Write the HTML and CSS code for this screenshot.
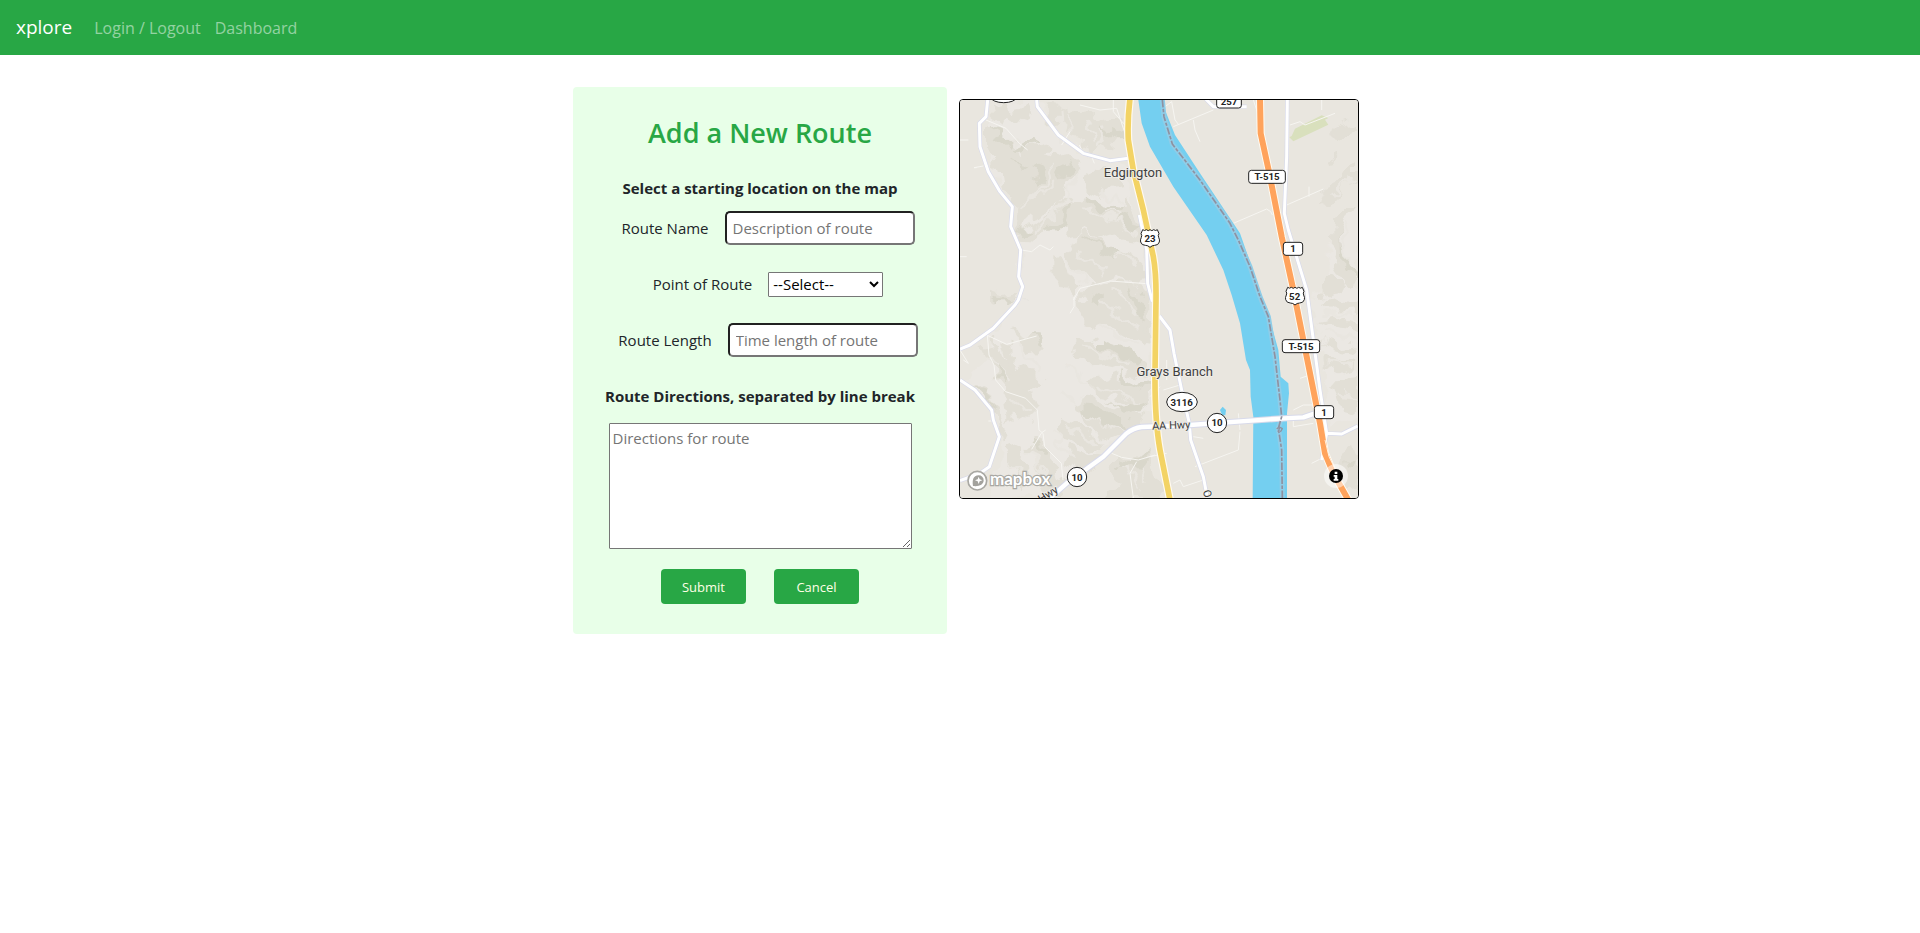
FILE: index.html
```html
<!DOCTYPE html>
<html lang="en">
<head>
<meta charset="utf-8">
<meta name="viewport" content="width=device-width, initial-scale=1">
<title>xplore</title>
<link rel="stylesheet" href="styles.css">
</head>
<body>
<nav class="navbar">
  <a class="brand" href="#">xplore</a>
  <a class="nav-link" href="#">Login / Logout</a>
  <a class="nav-link" href="#">Dashboard</a>
</nav>
<main class="content">
  <form class="route-form">
    <h1 class="title">Add a New Route</h1>
    <p class="section-label">Select a starting location on the map</p>
    <div class="field">
      <label for="name">Route Name</label>
      <input class="text-input" id="name" type="text" placeholder="Description of route">
    </div>
    <div class="field">
      <label for="point">Point of Route</label>
      <select class="select" id="point"><option>--Select--</option></select>
    </div>
    <div class="field">
      <label for="length">Route Length</label>
      <input class="text-input" id="length" type="text" placeholder="Time length of route">
    </div>
    <label class="section-label directions-label" for="directions">Route Directions, separated by line break</label>
    <textarea class="directions" id="directions" placeholder="Directions for route"></textarea>
    <div class="actions">
      <button class="btn" type="submit">Submit</button>
      <button class="btn" type="button">Cancel</button>
    </div>
  </form>
  <div class="map">
    <svg class="map-canvas" viewBox="0 0 1194 1194" role="img" aria-label="Map">
      <defs>
        <filter id="terrain" x="0" y="0" width="1194" height="1194" filterUnits="userSpaceOnUse">
          <feTurbulence type="fractalNoise" baseFrequency="0.022" numOctaves="2" seed="4"/>
          <feDisplacementMap in="SourceGraphic" scale="70" xChannelSelector="R" yChannelSelector="G"/>
        </filter>
      </defs>
      <rect class="land" width="1194" height="1194"/>
      <!-- hill shading -->
      <g filter="url(#terrain)">
      <g class="hill-light">
        <path d="M90 10L230 0 260 60 330 130 440 190 500 200 530 330 560 480 570 700 575 930 500 980 430 1050 330 1130 230 1194 90 1194 125 1010 100 930 20 840 110 700 180 590 190 450 160 320 90 200z"/>
        <path d="M1194 330L1150 360 1100 450 1120 560 1050 600 1090 760 1110 980 1194 960z"/>
      </g>
      <g class="hill">
        <path d="M85 20l50-12 30 22 40-10 15 30-30 20-40-12-30 16-30-24z"/>
        <path d="M250 10l60 5 30 20 40-5 40 30 60-10 15 45-30 40-40-5-25 30-50-30-40-55-40-10z"/>
        <path d="M75 75l50 20 30 40 35 15 50-30 30 25-40 25-20 40-40-15-30 25-40-30-25-50z"/>
        <path d="M120 200l60-35 50-5 60 15 45-10 30 25-50 60-25 65-60 20-30-30-40 20-25-45z"/>
        <path d="M165 320l50-20 60-40 30-60 20 15-20 80-60 60-55 20-25 50-15-30z"/>
        <path d="M160 375l40 15 35-15 50-40 30-60 25 5-20 70-50 40-50 35-40-5z"/>
        <path d="M370 235l40-30 50 10 30 40-40 5-30 25-35-15z"/>
        <path d="M340 300l50-10 40 30 50 5 30-30 30 60 20 80-60-10-35-25-45 15-60-20-40 10-20-50z"/>
        <path d="M350 400l60 15 50 35 60 20 40 40-30 40-70-20-50 25-50-30-45-50z"/>
        <path d="M280 465l30 20 15 40 40 40-25 20-35-40-25-45z"/>
        <path d="M350 600l40-40 60-15 80 5 40 60 5 110-50-10-50-40-50 15-60-20z"/>
        <path d="M90 575l40 10 50-12-8 22-50 15-32-12z"/>
        <path d="M350 705l50 20 40 30 60-5 60 50-10 30-60-15-50-30-60 5-50-45z"/>
        <path d="M400 645l50-25 40 40 60 20 10 50-60-20-40-25z"/>
        <path d="M400 835l60-10 40 25 75 10-10 50-50 20-60-35-50-10z"/>
        <path d="M350 915l50-20 60 30 90 30-60 45-45 20-60-40z"/>
        <path d="M300 960l70 20 70 50-15 35-40-10-40-25-50-10z"/>
        <path d="M330 1040l60 30 20 25-40 20-60-20z"/>
        <path d="M60 735l50-10 20 55 50 30 60 10 25 30-60 20-50 10-40-50-30-40z"/>
        <path d="M120 730l30 10 10 50 40 20-15 20-45-30z"/>
        <path d="M150 690l40 15 50-5 20 40-30 25-40-25z"/>
        <path d="M130 880l40-20 50 20 20 50-30 30-50-10-20 20z"/>
        <path d="M200 1040l40-30 20 50 50 70 15 20-60 40-20-60z"/>
        <path d="M135 1050l45-20 20 60 30 50-50 30-20-60z"/>
        <path d="M20 840l50 20 40 70 30 60-10 40-20-80-30-60z"/>
        <path d="M465 1050l60 25 50-10 10 60 25 69-180 0 40-50-20-50z"/>
        <path d="M1110 100l40-20 44-10 0 30-40 5zM1100 180l20-8 3 10-25 8z"/>
        <path d="M1075 280l60-30 40-50 19-5 0 50-40 20-40 40-30 10z"/>
        <path d="M1120 350l35-20 30 0-30 30-15 60 10 60 44 70-20 10-40-50-20-60z"/>
        <path d="M1080 560l40-30 35 10-10 30-50 30z"/>
        <path d="M1075 610l60-10 59 10 0 20-60 5zM1080 660l50-10 64 20 0 20-70-10zM1090 720l40 15 64-5-30 25-60-10z"/>
        <path d="M1090 770l50 20 54-10 0 30-60 10-40-20zM1110 850l84-10 0 100-50-10z"/>
        <path d="M1140 1080l54-40 0 110-30 10-40-40z"/>
      </g>
      <g class="ridge">
        <path d="M300 20l5 120M335 40l-4 90M380 50l20 60M440 70l-30 70M140 110l60 60M290 190l-70 110M350 210l-50 130M180 340l100-90M230 400l100-110M370 320l130 60M400 430l130 60M320 480l60 80M420 270l80 50M440 330l90 80M350 450l90 60"/>
        <path d="M370 740l150 60M420 680l120 60M400 600l140 80M450 570l100 90M410 860l140 60M370 940l130 50M330 980l90 50M180 730l60 80M70 760l90 80M150 900l60 40M150 1080l50 80M210 1060l60 90M280 1000l50 80M330 800l70 50M300 880l50 30M480 1080l60 90M520 1070l40 80"/>
        <path d="M1090 640l100 10M1090 700l100 15M1100 790l90 10M1130 880l60 10M1170 360l-20 90 30 80M1110 290l70-50"/>
      </g>
      <g class="hill-dark">
        <path d="M95 80l30 15 30 35-10 10-35-25zM155 150l35-15 25-25 12 8-30 35-35 12zM205 210l35-20 20 10-15 40-20 15 5-30z"/>
        <path d="M165 375l35 18 25-2-30 15-35-6zM270 385l30-20 25-60 8 5-15 60-40 30zM150 180l30 20 20-5-25 20z"/>
        <path d="M385 285l35 25 60 15-10 12-50-8-40-30zM455 360l50-15 40 50-30-5-25-20zM360 410l60 25 50 15-15 12-60-25z"/>
        <path d="M420 80l50 20 25-30 12 8-20 45-30-8zM310 200l20-20 5 15-20 40-20 20z"/>
        <path d="M100 590l60 10 25-10-40 22-40-5zM500 550l40 30 20 90-20-10-20-70zM380 600l40-30 10 20-30 40z"/>
        <path d="M420 720l60 20 70 45-10 12-70-30-50-20zM480 820l50 25 45-5-20 25-70-20z"/>
        <path d="M360 920l70 10 70 40-15 12-60-20-60-25zM440 900l60 30 60-25-15 35-40 10z"/>
        <path d="M30 850l40 15 35 65-12-10-40-55zM110 790l35 40-10 12-25-30zM215 1020l18-4 25 60-10 0zM225 700l20 0 8 35-14-5z"/>
        <path d="M475 1065l50 20 50-25-40 50-50-10zM1140 400l10 60 44 70-10 5-40-50zM1150 1090l44-20-10 30-30 20z"/>
      </g>
      </g>
      <path class="park" d="M988 112l12 12 105-50-10-15 10-5-20-8-80 40-10 22z"/>
      <!-- minor lanes -->
      <g class="lane">
        <path d="M78 60l60 25 40 45 25 20M360 15l60 15 50-5 25 75 8 10M460 0v35l35 40M330 95l-25 40M370 160l-12 -25M395 170l8 20M0 120h25M50 203l-8 0 28-5M0 470h20M185 450l30 5 25-20 30 15 10-10M340 600l20-35 90-22 110 8M330 640l12-20 0-30"/>
        <path d="M80 705l60 28 90-25M82 705l5 60 15 30 5 45 30 35 60 20 35 35 5 60 12 10 5 40 50 50 5 50M215 1048l30-50 12-8M0 750l25 40-15-10M455 1060l30 12 50 8 50-15M530 1085l-20 35 10 74M85 963h15"/>
        <path d="M615 20l20-15 10 55 12 15M640 80l120-50M700 60l5 30 15 35M820 370l100-43 12 8 5 10M980 315l110-48M1047 290v-30M990 75l30-10 15 10 90-35M1085 30v-30M880 0l20 60"/>
        <path d="M600 860l-30 30M610 870l50-15M620 780l0 60M705 1100l130-50 5-55M840 990l-5-50M570 1070l50-10M640 1150l20-10 10 20 60-20M700 1010l30 5M1020 835l30-10M1000 930l30-15 30 0M1000 950v30l60-10M1055 1090l30-15 10-20"/>
      </g>
      <path class="river" d="M535 0l10 70 25 70 70 120 100 145 50 105 25 75 25 85 18 110 12 30 2 80 8 60-2 244h103V940l6-60-2-30-23-20-7-80-25-90-20-60-70-200-20-30-100-150-75-115-30-75-3-30zM780 930l8-10 10 10-2 16-10-2z"/>
      <path class="state-halo" d="M607 0l5 50 25 82 83 108 90 130 25 50 35 80 30 90 25 60 20 120 15 130 5 50-10 35 10 65 2 144"/>
      <!-- roads -->
      <g class="road-case">
        <path d="M83 0l-5 50-20 20 2 70 25 75 35 60 37 45-5 60 30 70-6 80 12 30-13 40-10 15-65 70-70 50-30 12M0 840l45 30 50 60 5 30 18 50-30 90-28 20-60 22M230 0l2 20 63 85 75 55 80 22 55-7M538 345l22 105 3 100 14 55M598 648l32 42 12 70 23 110 23 100 4 50 38 110 12 63M725-30l15 30 20 20h100M982 0l-2 170-7 170 12 50 55 180 20 150 20 150 20 130-15 80M1100 1000l45 2 48-24"/>
      </g>
      <g class="road">
        <path d="M83 0l-5 50-20 20 2 70 25 75 35 60 37 45-5 60 30 70-6 80 12 30-13 40-10 15-65 70-70 50-30 12M0 840l45 30 50 60 5 30 18 50-30 90-28 20-60 22M230 0l2 20 63 85 75 55 80 22 55-7M538 345l22 105 3 100 14 55M598 648l32 42 12 70 23 110 23 100 4 50 38 110 12 63M725-30l15 30 20 20h100M982 0l-2 170-7 170 12 50 55 180 20 150 20 150 20 130-15 80M1100 1000l45 2 48-24"/>
      </g>
      <path class="main-case" d="M270 1194L320 1150 430 1070 500 1000Q520 984 545 981L690 975 970 955 1030 952 1080 935"/>
      <path class="main" d="M270 1194L320 1150 430 1070 500 1000Q520 984 545 981L690 975 970 955 1030 952 1080 935"/>
      <path class="state" d="M607 0l5 50 25 82 83 108 90 130 25 50 35 80 30 90 25 60 20 120 15 130 5 50-10 35 10 65 2 144"/>
      <path class="hw-case" d="M510-5Q502 60 505 120L520 210 550 330 580 470Q589 520 588 600L585 820Q584 960 600 1050L630 1200M900-5L902 100 928 220 965 410 1000 570 1040 770 1080 970 1095 1060 1120 1120 1165 1200"/>
      <path class="yellow" d="M510-5Q502 60 505 120L520 210 550 330 580 470Q589 520 588 600L585 820Q584 960 600 1050L630 1200"/>
      <path class="orange" d="M900-5L902 100 928 220 965 410 1000 570 1040 770 1080 970 1095 1060 1120 1120 1165 1200"/>
      <path class="ramp" d="M1095 1020l12 50 20 40"/>
      <!-- route shields -->
      <g class="shield">
        <ellipse cx="131" cy="-8" rx="38" ry="16"/>
        <rect x="770" y="-24" width="74" height="48" rx="8"/>
        <rect x="866" y="211" width="110" height="39" rx="8"/>
        <rect x="970" y="427" width="58" height="39" rx="8"/>
        <rect x="967" y="719" width="112" height="39" rx="8"/>
        <rect x="1063" y="917" width="58" height="39" rx="8"/>
        <ellipse cx="666" cy="906" rx="46" ry="29"/>
        <circle cx="771" cy="969" r="29"/>
        <circle cx="351" cy="1131" r="29"/>
        <path d="M548 389q6 5 11 0 6 6 11 0 6 6 11 0 6 5 11 0l5 12q-4 5-1 11 4 8 2 14-3 10-14 10-8 0-14 6-6-6-14-6-11 0-14-10-2-6 2-14 3-6-1-11z"/>
        <path d="M983 562q6 5 11 0 6 6 11 0 6 6 11 0 6 5 11 0l5 12q-4 5-1 11 4 8 2 14-3 10-14 10-8 0-14 6-6-6-14-6-11 0-14-10-2-6 2-14 3-6-1-11z"/>
      </g>
      <g class="shield-text">
        <text x="807" y="16">257</text>
        <text x="921" y="241">T-515</text>
        <text x="999" y="457">1</text>
        <text x="570" y="426">23</text>
        <text x="1004" y="599">52</text>
        <text x="1023" y="749">T-515</text>
        <text x="1092" y="947">1</text>
        <text x="665" y="917">3116</text>
        <text x="771" y="979">10</text>
        <text x="351" y="1142">10</text>
      </g>
      <g class="place">
        <text x="519" y="232">Edgington</text>
        <text x="644" y="829">Grays Branch</text>
        <text class="street" x="634" y="987" transform="rotate(-2 634 985)">AA Hwy</text>
        <text class="street" x="270" y="1192" transform="rotate(-32 270 1192)">Hwy</text>
        <text class="street" x="742" y="1192" transform="rotate(75 742 1181)">O</text>
      </g>
      <path class="glyph" d="M950 987l8-6 9 5-6 10M960 981l-6 15"/>
      <!-- mapbox mark -->
      <circle class="logo-ring" cx="52" cy="1142" r="28"/>
      <path class="logo-drop" d="M39 1158c-3-16 0-32 17-32a15 15 0 0 1 15 15c0 14-15 19-32 17z"/>
      <path class="logo-star" d="M56 1130l3 8 8 3-8 3-3 8-3-8-8-3 8-3z"/>
      <text class="logo-text" x="90" y="1156">mapbox</text>
      <!-- attribution toggle -->
      <circle class="info-halo" cx="1128" cy="1128" r="36"/>
      <circle class="info" cx="1128" cy="1128" r="21"/>
      <path class="info-i" d="M1124 1115h8v7h-8zM1121 1125h11v12h3v5h-14v-5h3v-7h-3z"/>
    </svg>
  </div>
</main>
</body>
</html>
```
FILE: styles.css
```css
*, *::before, *::after { box-sizing: border-box; }
body {
  margin: 0;
  background: #fff;
  color: #212529;
  font: 15px/24px "Open Sans", "Noto Sans", sans-serif;
}
.navbar {
  display: flex;
  align-items: center;
  padding: 12px 16px;
  background: #28a745;
}
.brand {
  margin-right: 22px;
  color: #fff;
  font-size: 19px;
  line-height: 31px;
  text-decoration: none;
}
.nav-link {
  margin-right: 14px;
  color: rgba(255, 255, 255, .5);
  font-size: 16px;
  text-decoration: none;
}
.content {
  display: flex;
  justify-content: center;
  align-items: flex-start;
  gap: 12px;
  padding: 32px 0 32px 12px;
}
.route-form {
  display: flex;
  flex-direction: column;
  align-items: center;
  width: 374px;
  padding: 29px 24px 30px;
  border-radius: 4px;
  background: #e8ffe8;
}
.title {
  margin: 0 0 26px;
  color: #28a745;
  font-size: 27px;
  font-weight: 600;
  line-height: 34px;
}
.section-label { margin: 0; font-weight: 700; white-space: nowrap; }
.directions-label { margin-top: 12px; }
.field {
  display: flex;
  align-items: center;
  gap: 16px;
  min-height: 26px;
  margin: 11px 0 15px 16px;
}
.text-input {
  width: 190px;
  height: 34px;
  padding: 0 6px;
  border: 2px inset #767676;
  border-radius: 5px;
  background: #fff;
  color: #212529;
  font: inherit;
}
.text-input::placeholder, .directions::placeholder { color: #757575; }
.select {
  width: 115px;
  height: 25px;
  border: 1px solid #767676;
  border-radius: 1px;
  background: #fff;
  color: #000;
  font: inherit;
}
.directions {
  width: 303px;
  height: 126px;
  margin: 15px 0 20px;
  padding: 2px 3px;
  border: 1px solid #767676;
  border-radius: 1px;
  background: #fff;
  font: inherit;
}
.actions { display: flex; gap: 28px; }
.btn {
  width: 85px;
  height: 35px;
  padding: 0;
  border: 0;
  border-radius: 4px;
  background: #28a745;
  color: #ffffe6;
  font: 13px/20px "Open Sans", "Noto Sans", sans-serif;
}
.map {
  width: 400px;
  margin-top: 12px;
  overflow: hidden;
  border: 1px solid #000;
  border-radius: 4px;
}
.map-canvas { display: block; width: 100%; }
.map-canvas path { stroke-linejoin: round; }
.land { fill: #e9e6df; }
.hill-light { fill: #ebe8e3; }
.hill { fill: #e2dfd6; }
.hill-dark { fill: #d9d7cb; }
.ridge { fill: none; stroke: #e9e6e0; stroke-width: 9; }
.park { fill: #d9e0bd; }
.lane { fill: none; stroke: #f6f5f1; stroke-width: 3; }
.river { fill: #74cff0; }
.state-halo { fill: none; stroke: #8fcde8; stroke-width: 15; }
.state { fill: none; stroke: #9091a0; stroke-width: 5; stroke-dasharray: 22 5 10 5; }
.road-case { fill: none; stroke: #d8daea; stroke-width: 13; }
.road { fill: none; stroke: #fff; stroke-width: 9; }
.main-case { fill: none; stroke: #d8daea; stroke-width: 19; }
.main { fill: none; stroke: #fff; stroke-width: 13; }
.hw-case { fill: none; stroke: #fffaf0; stroke-width: 24; }
.yellow { fill: none; stroke: #f3d364; stroke-width: 17; }
.orange { fill: none; stroke: #ffa35c; stroke-width: 18; }
.ramp { fill: none; stroke: #fff0df; stroke-width: 3; }
.shield { fill: #fff; stroke: #222; stroke-width: 3; }
.shield-text {
  fill: #222;
  font: 700 29px Roboto, sans-serif;
  text-anchor: middle;
}
.place {
  fill: #40403f;
  stroke: #f0eee9;
  stroke-width: 5;
  paint-order: stroke;
  font: 39px Roboto, sans-serif;
  text-anchor: middle;
}
.street { font-size: 33px; }
.glyph { fill: none; stroke: #9091a0; stroke-width: 4; }
.logo-ring { fill: #fff; stroke: #a9a8a3; stroke-width: 5; }
.logo-drop { fill: #a3a29d; }
.logo-star { fill: #fff; }
.logo-text {
  fill: #fff;
  stroke: #a9a8a3;
  stroke-width: 7;
  paint-order: stroke;
  font: 700 51px Lato, sans-serif;
}
.info-halo { fill: #fff; fill-opacity: .5; }
.info { fill: #000; }
.info-i { fill: #fff; }
```
